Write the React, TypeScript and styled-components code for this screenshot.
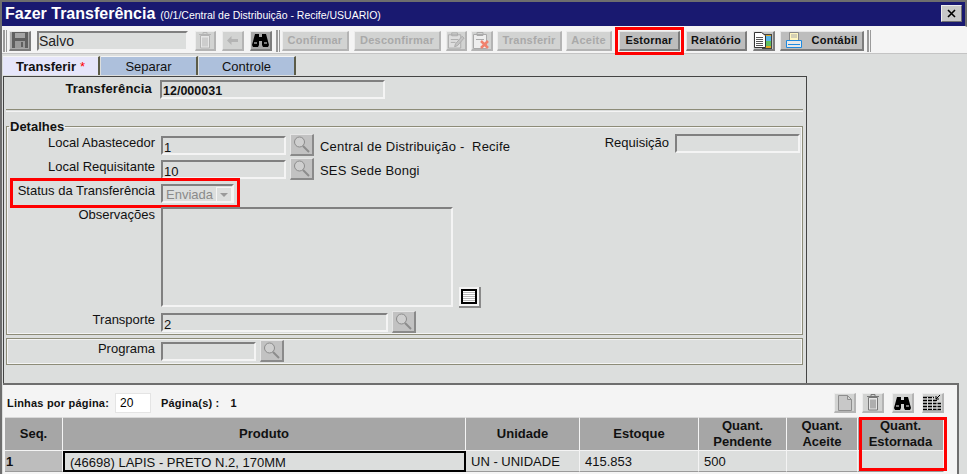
import React from 'react'
import styled, { createGlobalStyle, css } from 'styled-components'

const GlobalStyle = createGlobalStyle`
    html, body {
        margin: 0;
        padding: 0;
        background: #dcdedd;
    }
    * {
        box-sizing: border-box;
    }
`

const Page = styled.div`
    width: 967px;
    height: 474px;
    overflow: hidden;
    display: flex;
    flex-direction: column;
    font-family: 'Liberation Sans', Arial, sans-serif;
    font-size: 12px;
    color: #111;
    background: #dcdedd;
    border-left: 2px solid #6e6e6e;
`

const TitleBar = styled.div`
    height: 27px;
    flex: none;
    display: flex;
    align-items: center;
    padding: 0 3px 1px 5px;
    background: #191970;
    border: 2px solid #6e6e6e;
    border-width: 2px 2px 1px 0;
    color: #fff;
    border-bottom-color: #f4f4f4;
`

const Title = styled.span`
    font-size: 16px;
    font-weight: bold;
    margin-left: -2px;
`

const SubTitle = styled.span`
    font-size: 10.5px;
    margin-left: 5px;
    margin-top: 3px;
    flex: 1;
`

const CloseButton = styled.div`
    width: 21px;
    height: 17px;
    background: #c8c8c8;
    border: 1px solid;
    border-color: #eee #707070 #707070 #eee;
    color: #000;
    display: flex;
    align-items: center;
    justify-content: center;
`

const Toolbar = styled.div`
    height: 27px;
    flex: none;
    display: flex;
    align-items: center;
    padding: 1px 0 0 1px;
    background: #f4f4f4;
    border-bottom: 1px solid #c4c4c4;
`

const Handle = styled.div<{ $ml?: number }>`
    width: 4px;
    height: 22px;
    margin-left: ${(p) => p.$ml ?? 0}px;
    border-left: 2px solid #9a9a9a;
    border-right: 1px solid #9a9a9a;
`

const bevel = css`
    border-style: solid;
    border-width: 1px 2px 2px 1px;
    border-color: #e6e6e6 #7c7c7c #7c7c7c #e6e6e6;
`

const TextButton = styled.div<{ $w: number; $ml: number; $off?: boolean; $marked?: boolean }>`
    width: ${(p) => p.$w}px;
    height: 20px;
    margin-left: ${(p) => p.$ml}px;
    display: flex;
    align-items: center;
    justify-content: center;
    gap: 10px;
    font-size: 11px;
    font-weight: bold;
    letter-spacing: 0.25px;
    ${bevel}
    background: ${(p) => (p.$off ? '#d2d3d2' : '#bdbdbd')};
    color: ${(p) => (p.$off ? '#a9a9a9' : '#111')};
    ${(p) =>
        p.$off &&
        css`
            border-color: #ececec #b4b4b4 #b4b4b4 #ececec;
        `}
    ${(p) =>
        p.$marked &&
        css`
            outline: 3px solid #f00;
            outline-offset: 1px;
        `}
`

const IconButton = styled.div<{ $w?: number; $ml: number; $off?: boolean; $dark?: boolean }>`
    width: ${(p) => p.$w ?? 22}px;
    height: 20px;
    flex: none;
    margin-left: ${(p) => p.$ml}px;
    display: flex;
    align-items: center;
    justify-content: center;
    ${bevel}
    background: ${(p) => (p.$off ? '#d2d3d2' : p.$dark ? '#a8a8a8' : '#c4c4c4')};
    ${(p) =>
        p.$off &&
        css`
            border-color: #ececec #b4b4b4 #b4b4b4 #ececec;
        `}
`

const StatusInput = styled.input`
    width: 151px;
    height: 20px;
    margin-left: 6px;
    padding: 1px 0 0 0;
    background: #dcdedd;
    border: 2px solid;
    border-color: #808080 #f4f4f4 #f4f4f4 #808080;
    font: 14px 'Liberation Sans', Arial, sans-serif;
    color: #222;
    outline: none;
`

const Tabs = styled.div`
    height: 21px;
    flex: none;
    display: flex;
    padding: 2px 0 0 1px;
`

const Tab = styled.div<{ $active?: boolean }>`
    width: 97px;
    height: 19px;
    margin-right: 1px;
    display: flex;
    align-items: center;
    justify-content: center;
    font-size: 13px;
    font-weight: ${(p) => (p.$active ? 'bold' : 'normal')};
    background: ${(p) => (p.$active ? '#e6e6fa' : '#adc0dc')};
    border-right: 2px solid #5c5c48;
    border-top: 1px solid #f4f4f4;
`

const Star = styled.span`
    color: #f00;
    margin-left: 4px;
    font-weight: normal;
`

const FormPanel = styled.div`
    width: 804px;
    height: 307px;
    flex: none;
    margin: 1px 0 0 1px;
    padding: 3px 3px 0 2px;
    border: 1px solid #444;
    border-bottom: none;
`

const MainRow = styled.div`
    display: flex;
    gap: 8px;
    padding-left: 70px;
    height: 29px;
`

const BoldLabel = styled.span`
    width: 76px;
    font-size: 13px;
    font-weight: bold;
    letter-spacing: 0.15px;
    white-space: nowrap;
    padding-top: 1px;
    flex: none;
    display: flex;
    justify-content: flex-end;
`

const Sunken = css`
    background: #dcdedd;
    border: 2px solid;
    border-color: #808080 #f4f4f4 #f4f4f4 #808080;
    outline: none;
    font: 13px 'Liberation Sans', Arial, sans-serif;
    color: #111;
`

const Input = styled.input<{ $w: number; $flat?: boolean; $strong?: boolean }>`
    ${Sunken}
    width: ${(p) => p.$w}px;
    height: 19px;
    flex: none;
    margin-top: ${(p) => (p.$flat ? 0 : 2)}px;
    padding: 3px 0 0 1px;
    font-weight: ${(p) => (p.$strong ? 'bold' : 'normal')};
    font-size: ${(p) => (p.$strong ? 12.5 : 13)}px;
`

const Separator = styled.div`
    height: 3px;
    border-top: 1px solid #8d8c78;
    border-bottom: 1px solid #f4f4f4;
`

const Details = styled.fieldset`
    margin: 7px 0 0 0;
    padding: 0;
    height: 216px;
    border: 1px solid #8d8c78;
    box-shadow: inset 0 0 0 1px #f4f4f4;
`

const DetailsLegend = styled.legend`
    margin-left: 2px;
    padding: 0 1px;
    font-size: 13px;
    font-weight: bold;
    line-height: 15px;
`

const FieldRow = styled.div<{ $h: number; $marked?: boolean }>`
    position: relative;
    height: ${(p) => p.$h}px;
    display: flex;
    ${(p) =>
        p.$marked &&
        css`
            &::after {
                content: '';
                position: absolute;
                left: 3px;
                top: -4px;
                width: 224px;
                height: 24px;
                border: 3px solid #f00;
                pointer-events: none;
            }
        `}
`

const Label = styled.label`
    width: 148px;
    flex: none;
    margin-right: 6px;
    text-align: right;
    font-size: 13px;
    padding-top: 1px;
    white-space: nowrap;
`

const SearchButton = styled.div`
    width: 24px;
    height: 22px;
    flex: none;
    margin-left: 4px;
    display: flex;
    align-items: center;
    justify-content: center;
    background: #c2c2c2;
    border-style: solid;
    border-width: 1px 2px 2px 1px;
    border-color: #e6e6e6 #8a8a8a #8a8a8a #e6e6e6;
`

const PlainText = styled.span`
    margin-left: 6px;
    padding-top: 5px;
    font-size: 13px;
    letter-spacing: 0.2px;
    white-space: nowrap;
`

const SideField = styled.div`
    margin-left: auto;
    margin-right: 2px;
    display: flex;
`

const SelectBox = styled.div`
    ${Sunken}
    width: 73px;
    height: 19px;
    margin-top: 2px;
    display: flex;
    align-items: center;
    justify-content: space-between;
    padding: 1px 0 0 3px;
    color: #8a8a8a;
`

const SelectArrow = styled.div`
    width: 16px;
    height: 15px;
    background: #dcdedd;
    border: 1px solid #f4f4f4;
    position: relative;
    &::after {
        content: '';
        position: absolute;
        left: 3px;
        top: 5px;
        border: 4px solid transparent;
        border-top: 4px solid #9a9a9a;
    }
`

const NotesArea = styled.textarea`
    ${Sunken}
    width: 292px;
    height: 100px;
    flex: none;
    margin: 1px 0 0 0;
    resize: none;
`

const NotesButton = styled.div`
    width: 22px;
    height: 21px;
    align-self: flex-end;
    margin: 0 0 3px 6px;
    display: flex;
    align-items: center;
    justify-content: center;
    background: #f4f4f4;
    border-right: 2px solid #8a8a8a;
    border-bottom: 2px solid #8a8a8a;
`

const ProgramBox = styled.div`
    height: 27px;
    margin-top: 3px;
    display: flex;
    border: 1px solid #8d8c78;
    box-shadow: inset 0 0 0 1px #f4f4f4;
    padding-top: 1px;
`

const GridPanel = styled.div`
    width: 956px;
    flex: 1;
    margin-left: 1px;
    background: #f4f4f4;
    border: solid #6e6e6e;
    border-width: 2px 2px 0 0;
    padding: 0 0 0 2px;
    position: relative;
`

const PagerRow = styled.div`
    height: 32px;
    display: flex;
    align-items: center;
    font-size: 11px;
    font-weight: bold;
    padding: 4px 13px 0 2px;
`

const PageSizeInput = styled.input`
    width: 36px;
    height: 20px;
    margin-left: 6px;
    border: 1px solid #e4e4e4;
    background: #fff;
    font: 12px 'Liberation Sans', Arial, sans-serif;
    padding: 0 0 0 4px;
    outline: none;
`

const PageLabel = styled.span<{ $ml: number }>`
    margin-left: ${(p) => p.$ml}px;
    white-space: nowrap;
    letter-spacing: 0.2px;
`

const PagerIcons = styled.div`
    margin-left: auto;
    display: flex;
`

const TableWrap = styled.div`
    position: relative;
    width: 939px;
`

const DataTable = styled.table`
    width: 939px;
    table-layout: fixed;
    border-collapse: separate;
    border-spacing: 0;
`

const HeadCell = styled.th`
    height: 33px;
    padding: 0;
    background: #a6a6a6;
    border-right: 1px solid #f4f4f4;
    border-bottom: 1px solid #f4f4f4;
    border-top: 1px solid #d8d8d8;
    text-align: center;
    font-size: 13px;
    line-height: 16px;
    font-weight: bold;
    color: #111;
`

const BodyCell = styled.td<{ $focus?: boolean; $seq?: boolean }>`
    height: 21px;
    padding: 1px 0 0 5px;
    background: ${(p) => (p.$seq ? '#bdbdbd' : '#dcdedd')};
    font-size: 13px;
    font-weight: ${(p) => (p.$seq ? 'bold' : 'normal')};
    border-right: 1px solid #f4f4f4;
    border-bottom: 1px solid #9a9a9a;
    white-space: nowrap;
    overflow: hidden;
    ${(p) =>
        p.$seq &&
        css`
            padding-left: 1px;
        `}
    ${(p) =>
        p.$focus &&
        css`
            border: 2px solid #000;
            padding-left: 5px;
        `}
`

const ColumnMark = styled.div`
    position: absolute;
    top: 0;
    right: -3px;
    width: 88px;
    height: 54px;
    border: 3px solid #f00;
    pointer-events: none;
`

const FloppyIcon = () => (
    <svg width="18" height="16" viewBox="0 0 18 16">
        <rect x="1" y="0" width="16" height="16" fill="#5f5f5f" />
        <rect x="4" y="1" width="10" height="5" fill="#a4a4a4" />
        <rect x="4" y="9" width="10" height="7" fill="#9a9a9a" />
        <rect x="10" y="10" width="2" height="5" fill="#5f5f5f" />
    </svg>
)

const TrashIcon = ({ color = '#b4b4b4' }: { color?: string }) => (
    <svg width="14" height="17" viewBox="0 0 14 17" fill="none" stroke={color}>
        <path d="M1 2.5h12M5 2.5V.5h4v2" />
        <path d="M2.5 3.5h9v12.5h-9z" fill="#e6e6e6" />
        <path d="M5 5.5v9M7 5.5v9M9 5.5v9" />
    </svg>
)

const BackIcon = () => (
    <svg width="12" height="9" viewBox="0 0 12 9">
        <path d="M0 4.5L4.5 0v3H11v3H4.5v3z" fill="#b4b4b4" />
    </svg>
)

const BinocularsIcon = () => (
    <svg width="17" height="14" viewBox="0 0 17 14" fill="#000">
        <path d="M3 1h4v3h3V1h4l3 11-1 2h-5l-1-2V8H7v4l-1 2H1l-1-2z" />
        <rect x="2" y="9" width="3" height="2" fill="#777" />
        <rect x="12" y="9" width="3" height="2" fill="#777" />
    </svg>
)

const ClipEditIcon = () => (
    <svg width="19" height="17" viewBox="0 0 19 17" fill="none" stroke="#aaa">
        <path d="M1.5 2.5h13v14h-13z" fill="#dedede" />
        <path d="M5 .5h6v3H5zM4 7.5h8M4 10.5h5" />
        <path d="M8 15l1-3 7-8 2 2-7 8z" fill="#c4c4c4" />
    </svg>
)

const ClipDeleteIcon = () => (
    <svg width="19" height="17" viewBox="0 0 19 17" fill="none" stroke="#aaa">
        <path d="M1.5 2.5h13v14h-13z" fill="#eee" />
        <path d="M5 .5h6v3H5zM4 7.5h8" />
        <path d="M9 9l7 7M16 9l-7 7" stroke="#f0826e" strokeWidth="2.5" />
    </svg>
)

const DocImageIcon = () => (
    <svg width="19" height="17" viewBox="0 0 19 17">
        <rect x="8.5" y="2.5" width="9" height="14" fill="#e0a820" stroke="#444" />
        <rect x="12" y="4" width="5" height="5" fill="#58b4e8" />
        <rect x="12" y="9" width="5" height="5" fill="#5cc060" />
        <path d="M.5.5h7l4 3v12H.5z" fill="#fff" stroke="#333" />
        <path d="M2 5.5h7M2 7.5h7M2 9.5h7M2 11.5h7M2 13.5h7" stroke="#555" />
    </svg>
)

const PrinterIcon = () => (
    <svg width="16" height="16" viewBox="0 0 16 16" fill="none">
        <path d="M3.5.5h9v8h-9z" fill="#fff6c0" stroke="#888" />
        <path d="M5 3h6M5 5h6" stroke="#aaa" />
        <path d="M.5 8.5h15v7H.5z" fill="#e8e8e8" stroke="#1e8ae0" />
        <path d="M2 12.5h12" stroke="#1e8ae0" />
    </svg>
)

const MagnifierIcon = () => (
    <svg width="18" height="17" viewBox="0 0 18 17" fill="none">
        <circle cx="6.5" cy="6" r="5" stroke="#8c8c8c" fill="#cfcfcf" />
        <path d="M10 10l6 6" stroke="#8c8c8c" strokeWidth="2" />
    </svg>
)

const LinesIcon = () => (
    <svg width="16" height="15" viewBox="0 0 16 15">
        <rect x="1" y="1" width="14" height="13" fill="#fff" stroke="#000" strokeWidth="2" />
        <path d="M2 3.5h12M2 5.5h12M2 7.5h12M2 9.5h12M2 11.5h12" stroke="#b8b8b8" />
    </svg>
)

const BlankPageIcon = () => (
    <svg width="14" height="16" viewBox="0 0 14 16" fill="#c8c8c8" stroke="#8e8e8e">
        <path d="M.5.5h9l4 4v11H.5zM9.5.5v4h4" />
    </svg>
)

const ColumnsIcon = () => (
    <svg width="19" height="16" viewBox="0 0 19 16" stroke="#000">
        <path d="M0 2.5h11M0 5.5h14M0 8.5h18M0 11.5h18M0 14.5h18" strokeWidth="1.5" />
        <path d="M4.5 2v13M9.5 2v13M14 6v9" stroke="#dcdcdc" />
        <path d="M13 4l4-4M13 1v3h3" fill="none" />
    </svg>
)

const CloseIcon = () => (
    <svg width="9" height="9" viewBox="0 0 9 9" stroke="#000" strokeWidth="1.6">
        <path d="M1 1l7 7M8 1l-7 7" />
    </svg>
)

const COLUMN_WIDTHS = [58, 403, 114, 119, 88, 71, 86]

const App = () => {
    return (
        <Page>
            <GlobalStyle />
            <TitleBar>
                <Title>Fazer Transferência</Title>
                <SubTitle>(0/1/Central de Distribuição - Recife/USUARIO)</SubTitle>
                <CloseButton>
                    <CloseIcon />
                </CloseButton>
            </TitleBar>

            <Toolbar>
                <Handle />
                <IconButton $ml={2} $dark>
                    <FloppyIcon />
                </IconButton>
                <StatusInput readOnly value="Salvo" />
                <IconButton $ml={7} $w={21} $off>
                    <TrashIcon />
                </IconButton>
                <IconButton $ml={6} $off>
                    <BackIcon />
                </IconButton>
                <IconButton $ml={6} $dark>
                    <BinocularsIcon />
                </IconButton>
                <Handle $ml={4} />
                <TextButton $w={67} $ml={2} $off>Confirmar</TextButton>
                <TextButton $w={87} $ml={5} $off>Desconfirmar</TextButton>
                <IconButton $ml={5} $w={21} $off>
                    <ClipEditIcon />
                </IconButton>
                <IconButton $ml={4} $off>
                    <ClipDeleteIcon />
                </IconButton>
                <TextButton $w={65} $ml={4} $off>Transferir</TextButton>
                <TextButton $w={46} $ml={4} $off>Aceite</TextButton>
                <TextButton $w={61} $ml={7} $marked>Estornar</TextButton>
                <TextButton $w={61} $ml={6}>Relatório</TextButton>
                <IconButton $ml={6}>
                    <DocImageIcon />
                </IconButton>
                <TextButton $w={84} $ml={5}>
                    <PrinterIcon />
                    Contábil
                </TextButton>
                <Handle $ml={3} />
            </Toolbar>

            <Tabs>
                <Tab $active>
                    Transferir<Star>*</Star>
                </Tab>
                <Tab>Separar</Tab>
                <Tab>Controle</Tab>
            </Tabs>

            <FormPanel>
                <MainRow>
                    <BoldLabel>Transferência</BoldLabel>
                    <Input $w={225} $flat $strong readOnly value="12/000031" />
                </MainRow>
                <Separator />
                <Details>
                    <DetailsLegend>Detalhes</DetailsLegend>
                    <FieldRow $h={24}>
                        <Label>Local Abastecedor</Label>
                        <Input $w={125} readOnly value="1" />
                        <SearchButton>
                            <MagnifierIcon />
                        </SearchButton>
                        <PlainText>Central de Distribuição -&nbsp; Recife</PlainText>
                        <SideField>
                            <Label as="span">Requisição</Label>
                            <Input $w={125} $flat readOnly />
                        </SideField>
                    </FieldRow>
                    <FieldRow $h={24}>
                        <Label>Local Requisitante</Label>
                        <Input $w={125} readOnly value="10" />
                        <SearchButton>
                            <MagnifierIcon />
                        </SearchButton>
                        <PlainText>SES Sede Bongi</PlainText>
                    </FieldRow>
                    <FieldRow $h={24} $marked>
                        <Label>Status da Transferência</Label>
                        <SelectBox>
                            Enviada
                            <SelectArrow />
                        </SelectBox>
                    </FieldRow>
                    <FieldRow $h={105}>
                        <Label>Observações</Label>
                        <NotesArea readOnly />
                        <NotesButton>
                            <LinesIcon />
                        </NotesButton>
                    </FieldRow>
                    <FieldRow $h={22}>
                        <Label>Transporte</Label>
                        <Input $w={227} readOnly value="2" />
                        <SearchButton>
                            <MagnifierIcon />
                        </SearchButton>
                    </FieldRow>
                </Details>
                <ProgramBox>
                    <Label>Programa</Label>
                    <Input $w={95} readOnly />
                    <SearchButton>
                        <MagnifierIcon />
                    </SearchButton>
                </ProgramBox>
            </FormPanel>

            <GridPanel>
                <PagerRow>
                    <PageLabel $ml={0}>Linhas por página:</PageLabel>
                    <PageSizeInput readOnly value="20" />
                    <PageLabel $ml={10}>Página(s) :</PageLabel>
                    <PageLabel $ml={11}>1</PageLabel>
                    <PagerIcons>
                        <IconButton $ml={0} $off>
                            <BlankPageIcon />
                        </IconButton>
                        <IconButton $ml={6} $off>
                            <TrashIcon color="#777" />
                        </IconButton>
                        <IconButton $ml={8} $off>
                            <BinocularsIcon />
                        </IconButton>
                        <IconButton $ml={8} $off>
                            <ColumnsIcon />
                        </IconButton>
                    </PagerIcons>
                </PagerRow>
                <TableWrap>
                    <DataTable>
                        <colgroup>
                            {COLUMN_WIDTHS.map((w, i) => (
                                <col key={i} width={w} />
                            ))}
                        </colgroup>
                        <thead>
                            <tr>
                                <HeadCell>Seq.</HeadCell>
                                <HeadCell>Produto</HeadCell>
                                <HeadCell>Unidade</HeadCell>
                                <HeadCell>Estoque</HeadCell>
                                <HeadCell>
                                    Quant.
                                    <br />
                                    Pendente
                                </HeadCell>
                                <HeadCell>
                                    Quant.
                                    <br />
                                    Aceite
                                </HeadCell>
                                <HeadCell>
                                    Quant.
                                    <br />
                                    Estornada
                                </HeadCell>
                            </tr>
                        </thead>
                        <tbody>
                            <tr>
                                <BodyCell $seq>1</BodyCell>
                                <BodyCell $focus>(46698) LAPIS - PRETO N.2, 170MM</BodyCell>
                                <BodyCell>UN - UNIDADE</BodyCell>
                                <BodyCell>415.853</BodyCell>
                                <BodyCell>500</BodyCell>
                                <BodyCell />
                                <BodyCell />
                            </tr>
                        </tbody>
                    </DataTable>
                    <ColumnMark />
                </TableWrap>
            </GridPanel>
        </Page>
    )
}

export default App
